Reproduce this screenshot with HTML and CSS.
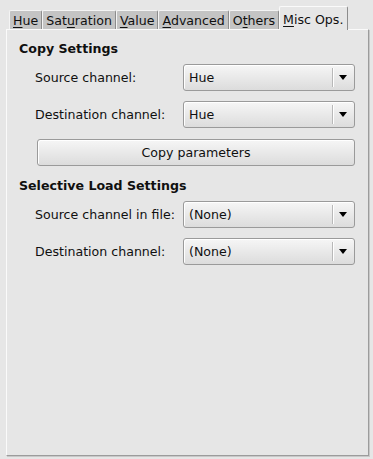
FILE: index.html
```html
<!DOCTYPE html>
<html>
<head>
<meta charset="utf-8">
<link rel="stylesheet" href="styles.css">
</head>
<body>
<div class="tabs">
  <div class="tab"><u>H</u>ue</div>
  <div class="tab">Sat<u>u</u>ration</div>
  <div class="tab"><u>V</u>alue</div>
  <div class="tab"><u>A</u>dvanced</div>
  <div class="tab">O<u>t</u>hers</div>
  <div class="tab active"><u>M</u>isc Ops.</div>
</div>
<div class="panel">
  <div class="heading">Copy Settings</div>
  <div class="form">
    <div class="label">Source channel:</div>
    <div class="combo"><span class="value">Hue</span><span class="sep"></span><span class="arrow"></span></div>
    <div class="label">Destination channel:</div>
    <div class="combo"><span class="value">Hue</span><span class="sep"></span><span class="arrow"></span></div>
    <div class="button">Copy parameters</div>
  </div>
  <div class="heading second">Selective Load Settings</div>
  <div class="form">
    <div class="label">Source channel in file:</div>
    <div class="combo"><span class="value">(None)</span><span class="sep"></span><span class="arrow"></span></div>
    <div class="label">Destination channel:</div>
    <div class="combo"><span class="value">(None)</span><span class="sep"></span><span class="arrow"></span></div>
  </div>
</div>
</body>
</html>
```
FILE: styles.css
```css
html, body {
  margin: 0;
  padding: 0;
  background: #e6e6e6;
  font-family: "DejaVu Sans", sans-serif;
  font-size: 12.6px;
  color: #101010;
  width: 373px;
  height: 459px;
  overflow: hidden;
}
.tabs {
  display: flex;
  align-items: flex-end;
  padding: 6px 0 0 9px;
  height: 23px;
  position: relative;
  z-index: 2;
}
.tab {
  height: 18px;
  line-height: 19px;
  padding: 0 3px 0 3px;
  background: #c4c4c4;
  border-top: 1px solid #f4f4f4;
  border-left: 1px solid #f4f4f4;
  border-right: 1px solid #8c8c8c;
  border-radius: 2px 2px 0 0;
  white-space: nowrap;
}
.tab u {
  text-decoration-thickness: 1px;
  text-underline-offset: 2px;
}
.tab.active {
  background: #e6e6e6;
  height: 23px;
  line-height: 25px;
  padding: 0 4px 0 3px;
  margin-bottom: -1px;
  border-top: 1px solid #fafafa;
  border-left: 1px solid #fafafa;
  border-right: 1px solid #8c8c8c;
}
.panel {
  margin: 0 4px 0 6px;
  border-top: 1px solid #fafafa;
  border-left: 1px solid #fafafa;
  border-right: 1px solid #9c9c9c;
  border-bottom: 1px solid #9c9c9c;
  box-shadow: 1px 1px 0 #c8c8c8;
  padding: 11px 13px 0 12px;
  box-sizing: border-box;
  height: 427px;
}
.heading {
  font-weight: bold;
  line-height: 16px;
}
.heading.second {
  margin-top: 12px;
}
.form {
  display: grid;
  grid-template-columns: 148px 172px;
  row-gap: 10px;
  align-items: center;
  padding-left: 16px;
  margin-top: 7px;
}
.label {
  line-height: 16px;
}
.combo {
  height: 27px;
  box-sizing: border-box;
  border: 1px solid #9a9a9a;
  border-radius: 3px;
  background: linear-gradient(#f6f6f6, #dcdcdc);
  box-shadow: inset 1px 1px 0 #ffffff;
  display: flex;
  align-items: center;
  padding-left: 5px;
  padding-right: 7px;
}
.combo .value {
  flex: 1;
}
.combo .sep {
  width: 1px;
  height: 19px;
  background: #ffffff;
  border-left: 1px solid #b8b8b8;
  margin-right: 5px;
}
.combo .arrow {
  width: 0;
  height: 0;
  border-left: 4px solid transparent;
  border-right: 4px solid transparent;
  border-top: 5px solid #000;
}
.button {
  grid-column: 1 / 3;
  margin-left: 2px;
  height: 27px;
  box-sizing: border-box;
  border: 1px solid #9a9a9a;
  border-radius: 3px;
  background: linear-gradient(#f6f6f6, #dcdcdc);
  box-shadow: inset 1px 1px 0 #ffffff;
  text-align: center;
  line-height: 25px;
  margin-top: 1px;
}
```
